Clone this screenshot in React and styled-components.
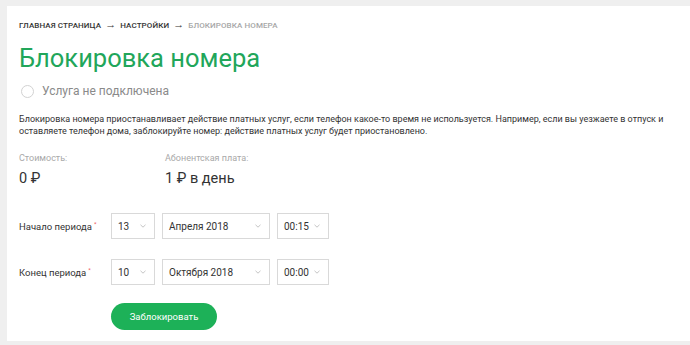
import React from 'react';
import styled, { createGlobalStyle } from 'styled-components';

const GlobalStyle = createGlobalStyle`
  body {
    margin: 0;
    background: #efefef;
    font-family: Roboto, "Liberation Sans", sans-serif;
    color: #333;
  }
`;

const Page = styled.div`
  padding: 6px 0 0 7px;
  height: 345px;
  box-sizing: border-box;
  overflow: hidden;
`;

const Card = styled.main`
  background: #fff;
  height: 335px;
  box-sizing: border-box;
  padding: 14px 0 0 12px;
`;

const Breadcrumbs = styled.nav`
  display: flex;
  align-items: center;
  gap: 4px;
  font-size: 8px;
  font-weight: 500;
  text-transform: uppercase;
  letter-spacing: 0.1px;
  line-height: 12px;
`;

const Crumb = styled.span`
  color: ${(p) => (p.current ? '#a7a7a7' : '#333')};
`;

const Arrow = styled.span`
  font-size: 11px;
  font-weight: 700;
  line-height: 1;
  margin-top: -3px;
  color: #333;
`;

const Title = styled.h1`
  margin: 10px 0 0;
  font-size: 25.5px;
  font-weight: 400;
  line-height: 32px;
  color: #21a65a;
`;

const Status = styled.div`
  display: flex;
  align-items: center;
  gap: 8px;
  margin: 10px 0 0 2px;
  font-size: 12px;
  color: #8a8a8a;
`;

const Radio = styled.span`
  width: 11px;
  height: 11px;
  border-radius: 50%;
  border: 1px solid #d2d2d2;
`;

const Description = styled.p`
  margin: 15px 0 0;
  font-size: 9px;
  line-height: 12px;
  color: #333;
  white-space: nowrap;
`;

const Prices = styled.div`
  display: flex;
  margin-top: 16px;
`;

const Price = styled.div`
  width: 146px;
`;

const PriceLabel = styled.div`
  font-size: 9px;
  line-height: 11px;
  color: #a9a9a9;
`;

const PriceValue = styled.div`
  margin-top: 6px;
  font-size: 14.5px;
  line-height: 18px;
  color: #333;
`;

const Form = styled.div`
  display: flex;
  flex-direction: column;
  gap: 20px;
  margin-top: 25px;
`;

const Row = styled.div`
  display: flex;
  align-items: center;
`;

const Label = styled.div`
  width: 92px;
  font-size: 9.5px;
  color: #333;
  sup {
    color: #e55;
    font-size: 6px;
    margin-left: 2px;
  }
`;

const Selects = styled.div`
  display: flex;
  gap: 7px;
`;

const Select = styled.div`
  display: flex;
  align-items: center;
  justify-content: space-between;
  width: ${(p) => p.w}px;
  height: 26px;
  box-sizing: border-box;
  border: 1px solid #d9d9d9;
  padding: 0 8px 0 6px;
  font-size: 10px;
  color: #333;
`;

const Caret = styled.svg`
  width: 6px;
  height: 4px;
  flex: none;
`;

const Submit = styled.button`
  margin: 18px 0 0 92px;
  width: 106px;
  height: 27px;
  border: none;
  border-radius: 14px;
  background: #1db158;
  color: #fff;
  font-family: inherit;
  font-size: 9.5px;
  cursor: pointer;
`;

const Field = ({ value, w }) => (
  <Select w={w}>
    {value}
    <Caret viewBox="0 0 6 4">
      <path d="M0.5 0.8 L3 3.2 L5.5 0.8" fill="none" stroke="#c4c4c4" strokeWidth="1" />
    </Caret>
  </Select>
);

const rows = [
  { label: 'Начало периода', day: '13', month: 'Апреля 2018', time: '00:15' },
  { label: 'Конец периода', day: '10', month: 'Октября 2018', time: '00:00' },
];

export default function App() {
  return (
    <Page>
      <GlobalStyle />
      <Card>
        <Breadcrumbs>
          <Crumb>Главная страница</Crumb>
          <Arrow>→</Arrow>
          <Crumb>Настройки</Crumb>
          <Arrow>→</Arrow>
          <Crumb current>Блокировка номера</Crumb>
        </Breadcrumbs>
        <Title>Блокировка номера</Title>
        <Status>
          <Radio />
          Услуга не подключена
        </Status>
        <Description>
          Блокировка номера приостанавливает действие платных услуг, если телефон какое-то время не используется.
          Например, если вы уезжаете в отпуск и
          <br />
          оставляете телефон дома, заблокируйте номер: действие платных услуг будет приостановлено.
        </Description>
        <Prices>
          <Price>
            <PriceLabel>Стоимость:</PriceLabel>
            <PriceValue>0 ₽</PriceValue>
          </Price>
          <Price>
            <PriceLabel>Абонентская плата:</PriceLabel>
            <PriceValue>1 ₽ в день</PriceValue>
          </Price>
        </Prices>
        <Form>
          {rows.map((r) => (
            <Row key={r.label}>
              <Label>
                {r.label}
                <sup>*</sup>
              </Label>
              <Selects>
                <Field value={r.day} w={44} />
                <Field value={r.month} w={108} />
                <Field value={r.time} w={52} />
              </Selects>
            </Row>
          ))}
        </Form>
        <Submit>Заблокировать</Submit>
      </Card>
    </Page>
  );
}
